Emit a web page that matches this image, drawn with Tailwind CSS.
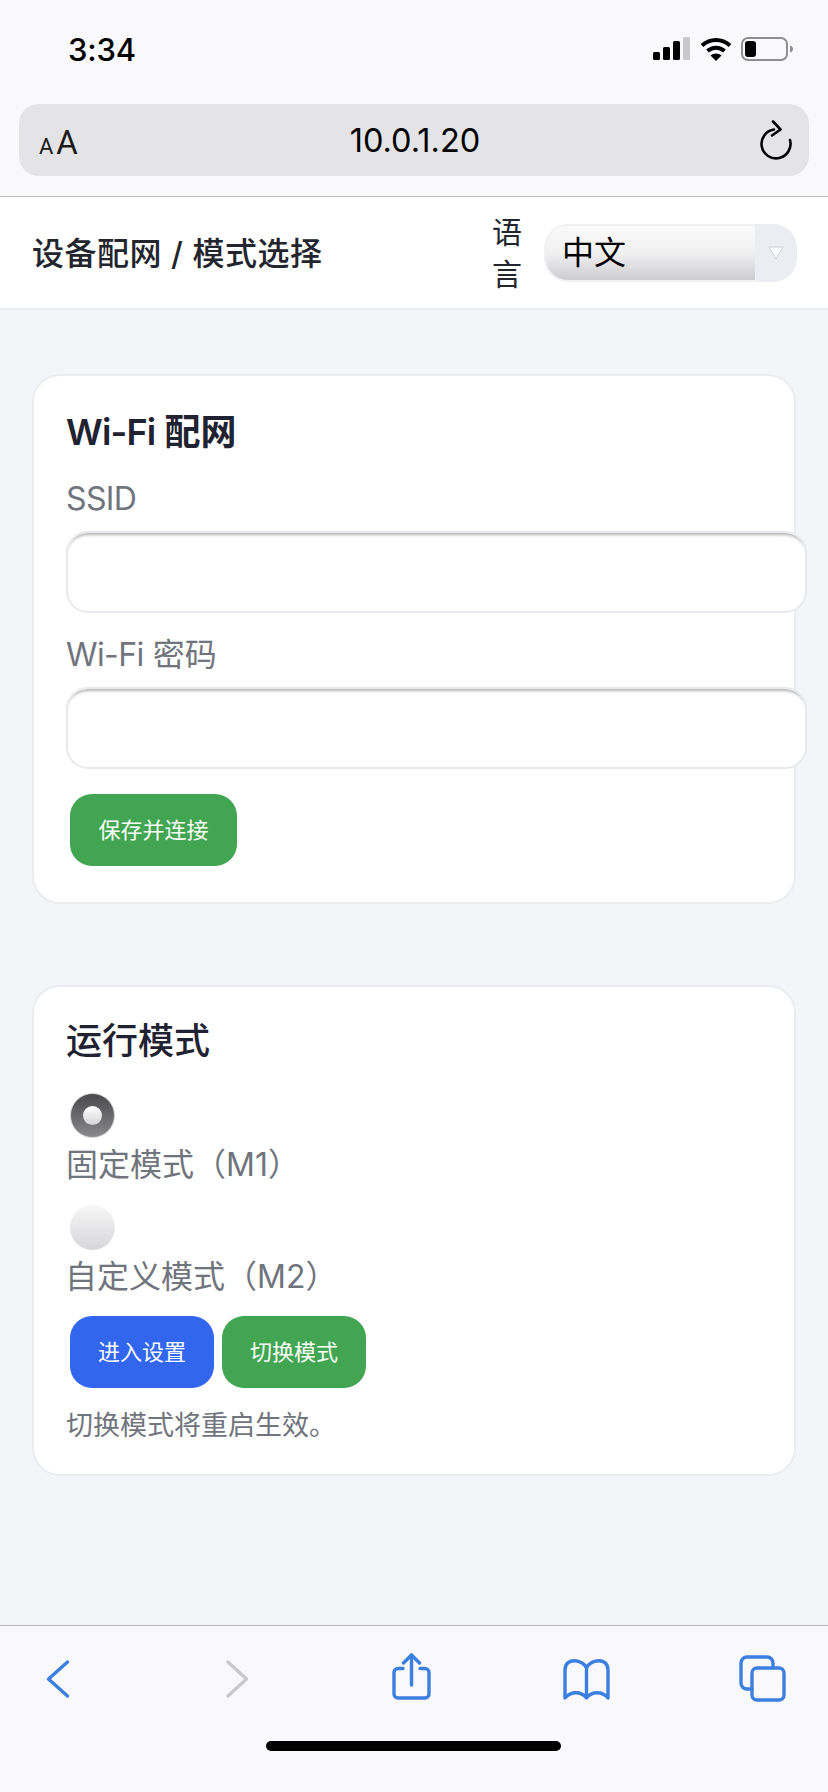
<!DOCTYPE html>
<html lang="zh">
<head>
<meta charset="utf-8">
<script src="https://cdn.jsdelivr.net/npm/@tailwindcss/browser@4"></script>
</head>
<body class="m-0">
<div class="w-[828px] h-[1792px] flex flex-col bg-[#f4f5f9] overflow-hidden font-['Inter','Noto_Sans_CJK_SC',sans-serif]">

  <!-- Safari top chrome -->
  <div class="h-[197px] shrink-0 bg-[#f9f9fb] border-b border-[#b9b9bd] flex flex-col">
    <div class="h-[104px] shrink-0 flex items-start justify-between pl-[68px] pr-[34px] pt-[30px]">
      <span class="text-[31px] leading-[40px] font-medium text-black tracking-[-0.2px]">3:34</span>
      <div class="flex items-end gap-[9px] pt-[7px]">
        <svg width="38" height="24" viewBox="0 0 38 24"><rect x="0" y="15" width="7" height="8" rx="1.5" fill="#000"/><rect x="10" y="10" width="7" height="13" rx="1.5" fill="#000"/><rect x="20" y="4" width="7" height="19" rx="1.5" fill="#000"/><rect x="30" y="0" width="7" height="23" rx="1" fill="#c9c9cb"/></svg>
        <svg width="32" height="24" viewBox="0 0 32 24"><path d="M2 8.5C10 1 22 1 30 8.5" fill="none" stroke="#000" stroke-width="4"/><path d="M7.5 14C12.5 9.5 19.5 9.5 24.5 14" fill="none" stroke="#000" stroke-width="4"/><path d="M16 24L10.5 18.5C13.5 15.8 18.5 15.8 21.5 18.5Z" fill="#000"/></svg>
        <svg width="53" height="24" viewBox="0 0 53 24"><rect x="1" y="1" width="45" height="22" rx="6" fill="none" stroke="#8e8e92" stroke-width="2"/><rect x="4" y="4" width="11" height="16" rx="3" fill="#000"/><path d="M49 8.5C51 9 52 10.5 52 12S51 15 49 15.5Z" fill="#8e8e92"/></svg>
      </div>
    </div>
    <div class="mx-[19px] h-[72px] rounded-[20px] bg-[#e4e4e7] relative flex items-center justify-between pl-[20px] pr-[15px]">
      <div class="flex items-baseline gap-[3px] text-[#1a1a1a] font-['Roboto',sans-serif] translate-y-[2px]"><span class="text-[22px] leading-none">A</span><span class="text-[33px] leading-none">A</span></div>
      <span class="text-[32.5px] leading-none text-black -translate-x-[3px] translate-y-[1px]">10.0.1.20</span>
      <svg width="36" height="40" viewBox="0 0 36 40" fill="none" stroke="#000" stroke-width="2.6" stroke-linecap="round" stroke-linejoin="round"><path d="M16 9.500A14.500 14.500 0 1 0 32 20"/><path d="M15 1.500L22.500 9.500L14 15.500"/></svg>
    </div>
  </div>

  <!-- Page header -->
  <header class="h-[113px] shrink-0 bg-white border-b-2 border-[#ebecf0] flex items-center pl-[32px] pr-[31px] justify-between">
    <h1 class="text-[32px] leading-[40px] font-medium text-[#23252e] tracking-[0.5px] translate-y-[1px]">设备配网 / 模式选择</h1>
    <div class="flex items-center gap-[22px]">
      <span class="w-[30px] text-[30px] leading-[42px] text-[#23252e] text-center">语言</span>
      <div class="relative w-[253px] h-[58px]">
        <select class="appearance-none w-full h-full rounded-[24px] pl-[16px] text-[32px] text-black border-2 border-[#f1f1f4] outline-none bg-gradient-to-b from-[#fafafb] via-[#f0f0f1] to-[#cdcdd0]"><option>中文</option></select>
        <div class="absolute right-0 top-0 bottom-0 w-[42px] rounded-r-[24px] bg-[#ecedf2] flex items-center justify-center pointer-events-none">
          <svg width="16" height="14" viewBox="0 0 16 14"><path d="M1 1H15L8 13Z" fill="#fbfbfd" stroke="#d0d0d6" stroke-width="1"/></svg>
        </div>
      </div>
    </div>
  </header>

  <!-- Content -->
  <main class="flex-1 flex flex-col gap-[81px] pl-[32px] pt-[64px]">
    <section class="w-[764px] h-[530px] shrink-0 bg-white border-2 border-[#ebecf0] rounded-[28px] pl-[32px] pt-[32px]">
      <h2 class="text-[36px] leading-[48px] font-semibold text-[#1f2230]"><span class="tracking-[-0.8px]">Wi-Fi</span> 配网</h2>
      <label class="block text-[32px] leading-[44px] text-[#70747d] mt-[21px] tracking-[-0.6px]">SSID</label>
      <input type="text" class="block mt-[10px] w-[741px] h-[82px] rounded-[22px] bg-white border-2 border-[#e8e9ec] outline-none shadow-[inset_0_5px_3px_-3px_rgba(0,0,0,0.3)]">
      <label class="block text-[32px] leading-[44px] text-[#70747d] mt-[20px]"><span class="tracking-[-0.6px]">Wi-Fi</span> 密码</label>
      <input type="text" class="block mt-[10px] w-[741px] h-[82px] rounded-[22px] bg-white border-2 border-[#e8e9ec] outline-none shadow-[inset_0_5px_3px_-3px_rgba(0,0,0,0.3)]">
      <button class="block ml-[4px] mt-[25px] w-[167px] h-[72px] rounded-[22px] bg-[#41a551] text-white text-[22px]">保存并连接</button>
    </section>

    <section class="w-[764px] h-[491px] shrink-0 bg-white border-2 border-[#ebecf0] rounded-[28px] pl-[32px] pt-[30px]">
      <h2 class="text-[36px] leading-[48px] font-medium text-[#1f2230]">运行模式</h2>
      <input type="radio" name="mode" checked class="block appearance-none w-[45px] h-[45px] ml-[4px] mt-[28px] rounded-full border border-[#cfcfd2] bg-gradient-to-b from-[#4a4a4c] to-[#8a8a8d] relative after:content-[''] after:absolute after:left-[12px] after:top-[12px] after:w-[19px] after:h-[19px] after:rounded-full after:bg-gradient-to-b after:from-[#ffffff] after:to-[#d4d4d6]">
      <label class="block text-[32px] leading-[44px] text-[#70747d] mt-[5px]">固定模式（M1）</label>
      <input type="radio" name="mode" class="block appearance-none w-[45px] h-[45px] ml-[4px] mt-[18px] rounded-full bg-gradient-to-b from-[#f7f7f8] to-[#d7d7d9]">
      <label class="block text-[32px] leading-[44px] text-[#70747d] mt-[5px] -ml-[1px]">自定义模式（M2）</label>
      <div class="flex gap-[8px] ml-[4px] mt-[17px]">
        <button class="w-[144px] h-[72px] rounded-[22px] bg-[#3366ee] text-white text-[22px]">进入设置</button>
        <button class="w-[144px] h-[72px] rounded-[22px] bg-[#41a551] text-white text-[22px]">切换模式</button>
      </div>
      <p class="text-[27px] leading-[38px] text-[#70747d] mt-[19px]">切换模式将重启生效。</p>
    </section>
  </main>

  <!-- Safari bottom toolbar -->
  <footer class="h-[167px] shrink-0 bg-[#f9f9fb] border-t border-[#b3b3b8] flex flex-col">
    <div class="flex justify-between pl-[34px] pr-[41px] pt-[27px]">
      <svg width="50" height="50" viewBox="0 0 50 50" fill="none" stroke="#3b7fe0" stroke-width="3.4" stroke-linecap="round" stroke-linejoin="round"><path d="M33.500 9L14.500 26L33.500 43"/></svg>
      <svg width="50" height="50" viewBox="0 0 50 50" fill="none" stroke="#c9c9cc" stroke-width="3.4" stroke-linecap="round" stroke-linejoin="round"><path d="M18 9L36.500 26L18 43"/></svg>
      <svg width="50" height="50" viewBox="0 0 50 50" fill="none" stroke="#3b7fe0" stroke-width="3.4" stroke-linecap="round" stroke-linejoin="round"><path d="M17 15.500H12a4 4 0 0 0-4 4V41a4 4 0 0 0 4 4H39a4 4 0 0 0 4-4V19.500a4 4 0 0 0-4-4H34"/><path d="M25.500 32V2"/><path d="M17.500 10L25.500 2L33.500 10"/></svg>
      <svg width="50" height="50" viewBox="0 0 50 50" fill="none" stroke="#3b7fe0" stroke-width="3.4" stroke-linecap="round" stroke-linejoin="round"><path d="M25.500 15C23 7 4 3 4 17V45C10 38 20 38 25.500 45C31 38 41 38 47 45V17C47 3 28 7 25.500 15V44"/></svg>
      <svg width="50" height="50" viewBox="0 0 50 50" fill="none" stroke="#3b7fe0" stroke-width="3.4" stroke-linecap="round" stroke-linejoin="round"><path d="M36 14V10a6 6 0 0 0-6-6H10a6 6 0 0 0-6 6V30a6 6 0 0 0 6 6H15"/><rect x="15" y="15" width="32" height="32" rx="5"/></svg>
    </div>
    <div class="w-[295px] h-[10px] rounded-full bg-black mt-[38px] ml-[266px]"></div>
  </footer>
</div>
</body>
</html>
